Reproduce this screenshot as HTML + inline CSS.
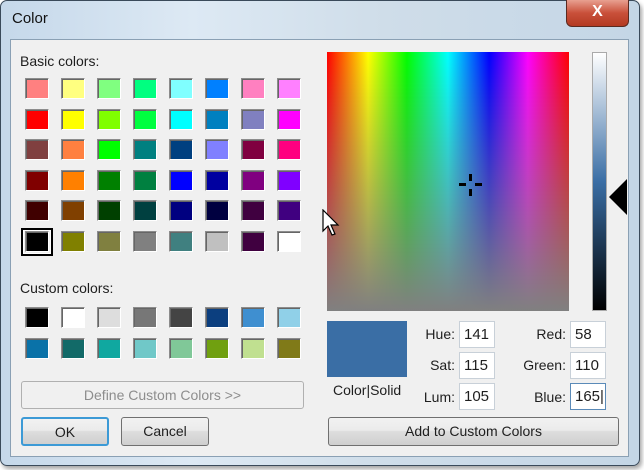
<!DOCTYPE html>
<html><head><style>
*{box-sizing:border-box;margin:0;padding:0}
body{width:644px;height:470px;overflow:hidden;background:#fff;font-family:"Liberation Sans",sans-serif;font-size:14px;color:#1e1e1e;position:relative}
.frame{position:absolute;left:0;top:0;width:640px;height:466px;border:1px solid #3a4a5a;border-radius:7px;background:linear-gradient(90deg,#c5d8ea,#dde9f4 30%,#cfdde9 60%,#c4d6e6);box-shadow:2px 3px 4px rgba(0,0,0,.35)}
.title{position:absolute;left:12px;top:10px;font-size:15px;color:#111}
.close{position:absolute;left:566px;top:0;width:63px;height:27px;border:1px solid #5a2a20;border-top:none;border-radius:0 0 6px 6px;background:linear-gradient(#e8a090,#c9503a 50%,#b33a22);color:#fff;font-weight:bold;font-size:16px;text-align:center;line-height:24px}
.client{position:absolute;left:10px;top:39px;width:619px;height:418px;background:#f0f0f0;border:1px solid #8aa0b4}
.a{position:absolute}
.sw{position:absolute;width:24px;height:21px;border:1px solid #8c8c8c;border-right-color:#fff;border-bottom-color:#fff;box-shadow:inset 1px 1px 0 #666}
.btn{position:absolute;border:1px solid #707070;border-radius:3px;background:linear-gradient(#f2f2f2,#ebebeb 45%,#dddddd 50%,#cfcfcf);text-align:center;line-height:26px;font-size:14px}
.box{position:absolute;width:36px;height:27px;background:#fff;border:1px solid #c8d0d8;padding-left:4px;line-height:25px;font-size:15px}
.lbl{position:absolute;text-align:right;font-size:14px}
</style></head><body>
<div class="frame"></div>
<div class="title">Color</div>
<div class="close">X</div>
<div class="client"></div>
<div class="a" style="left:20px;top:53px">Basic colors:</div>
<div class="a" style="left:20px;top:280px">Custom colors:</div>
<div id="g"></div>
<div class="a" style="left:327px;top:52px;width:242px;height:259px;background:linear-gradient(rgba(128,128,128,0),#808080),linear-gradient(90deg,#f00,#ff0 17%,#0f0 33%,#0ff 50%,#00f 67%,#f0f 83%,#f00)"></div>
<svg class="a" style="left:458px;top:172px" width="26" height="26"><g fill="#000"><rect x="11" y="2" width="3" height="7"/><rect x="11" y="17" width="3" height="7"/><rect x="1" y="11" width="7" height="3"/><rect x="17" y="11" width="7" height="3"/></g></svg>
<svg class="a" style="left:322px;top:209px" width="20" height="30"><path d="M1 1 L1 22 L6 17 L10 26 L13 25 L9 16 L16 16 Z" fill="#fff" stroke="#000" stroke-width="1.2"/></svg>
<div class="a" style="left:592px;top:52px;width:15px;height:259px;border:1px solid #aaa;background:linear-gradient(#fff,#3a6ea5 50%,#000)"></div>
<svg class="a" style="left:609px;top:179px" width="20" height="36"><path d="M18 0 L0 18 L18 36 Z" fill="#000"/></svg>
<div class="a" style="left:327px;top:321px;width:80px;height:56px;background:#3a6ea5"></div>
<div class="a" style="left:333px;top:382px">Color|Solid</div>
<div class="lbl" style="left:410px;top:326px;width:45px">Hue:</div>
<div class="lbl" style="left:410px;top:357px;width:45px">Sat:</div>
<div class="lbl" style="left:410px;top:389px;width:45px">Lum:</div>
<div class="box" style="left:459px;top:321px">141</div>
<div class="box" style="left:459px;top:352px">115</div>
<div class="box" style="left:459px;top:383px">105</div>
<div class="lbl" style="left:500px;top:326px;width:66px">Red:</div>
<div class="lbl" style="left:500px;top:357px;width:66px">Green:</div>
<div class="lbl" style="left:500px;top:389px;width:66px">Blue:</div>
<div class="box" style="left:570px;top:321px">58</div>
<div class="box" style="left:570px;top:352px">110</div>
<div class="box" style="left:570px;top:383px;border-color:#5a8ab8">165|</div>
<div class="btn" style="left:21px;top:381px;width:283px;height:28px;color:#8d8d8d;background:#f0f0f0;border-color:#b0b0b0">Define Custom Colors &gt;&gt;</div>
<div class="btn" style="left:21px;top:417px;width:88px;height:29px;border:2px solid #3c9ad6">OK</div>
<div class="btn" style="left:121px;top:417px;width:88px;height:29px">Cancel</div>
<div class="btn" style="left:328px;top:417px;width:291px;height:29px">Add to Custom Colors</div>
<script>
var b=["#ff8080","#ffff80","#80ff80","#00ff80","#80ffff","#0080ff","#ff80c0","#ff80ff",
"#ff0000","#ffff00","#80ff00","#00ff40","#00ffff","#0080c0","#8080c0","#ff00ff",
"#804040","#ff8040","#00ff00","#008080","#004080","#8080ff","#800040","#ff0080",
"#800000","#ff8000","#008000","#008040","#0000ff","#0000a0","#800080","#8000ff",
"#400000","#804000","#004000","#004040","#000080","#000040","#400040","#400080",
"#000000","#808000","#808040","#808080","#408080","#c0c0c0","#400040","#ffffff"];
var c=["#000","#fff","#ddd","#777","#444","#0c3f7f","#3f8fd0","#90d0e8","#0a72a8","#126a68","#10a8a0","#70c8c8","#80c898","#70a010","#c0e090","#807a18"];
var h="";
for(var i=0;i<48;i++){var x=25+(i%8)*36,y=78+Math.floor(i/8)*30.5;h+='<div class="sw" style="left:'+x+'px;top:'+y+'px;background:'+b[i]+'"></div>';}
h+='<div class="a" style="left:21px;top:228px;width:32px;height:28px;border:2px solid #000;outline:1px solid #fff;outline-offset:-3px"></div>';
for(var i=0;i<16;i++){var x=25+(i%8)*36,y=307+Math.floor(i/8)*31;h+='<div class="sw" style="left:'+x+'px;top:'+y+'px;background:'+c[i]+'"></div>';}
document.getElementById("g").innerHTML=h;
</script>
</body></html>
